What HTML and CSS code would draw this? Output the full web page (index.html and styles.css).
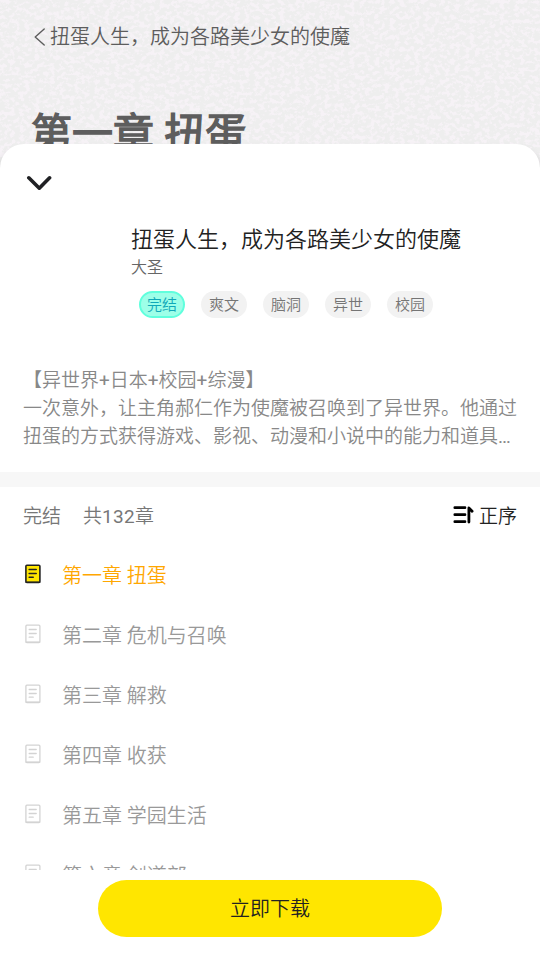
FILE: index.html
```
<!DOCTYPE html>
<html lang="zh-CN">
<head>
<meta charset="utf-8">
<title>扭蛋人生，成为各路美少女的使魔</title>
<link rel="stylesheet" href="styles.css">
</head>
<body>
<svg class="defs" aria-hidden="true">
  <symbol id="doc" viewBox="0 0 18 20">
    <rect class="page" x="1.9" y="1.2" width="14" height="17.3" rx="1"/>
    <path class="edge" d="M2.2 18.2h13.4"/>
    <path class="lines" d="M5.2 5.5h7M5.2 9.5h7M5.2 13.2h4"/>
  </symbol>
</svg>
<div class="app">
  <header class="reader">
    <svg class="paper" width="540" height="170" aria-hidden="true">
      <filter id="grain" x="0" y="0" width="100%" height="100%" color-interpolation-filters="sRGB">
        <feTurbulence type="fractalNoise" baseFrequency="0.2 0.25" numOctaves="3" seed="8"/>
        <feColorMatrix values="0 0 0 0 .965  0 0 0 0 .949  0 0 0 0 .965  7 0 0 0 -3.3"/>
      </filter>
      <rect width="540" height="170" filter="url(#grain)"/>
    </svg>
    <div class="back">
      <svg width="12" height="18" viewBox="0 0 12 18"><path d="M10.2 1L1.2 9l9 8"/></svg>
      <span>扭蛋人生，成为各路美少女的使魔</span>
    </div>
    <h1>第一章 扭蛋</h1>
  </header>
  <main class="sheet">
    <svg class="collapse" width="26" height="16" viewBox="0 0 26 16"><path d="M2.8 2.8l10.5 10.4L23.6 2.8"/></svg>
    <section class="book">
      <h2>扭蛋人生，成为各路美少女的使魔</h2>
      <p class="author">大圣</p>
      <div class="tags"><span class="tag done">完结</span><span class="tag">爽文</span><span class="tag">脑洞</span><span class="tag">异世</span><span class="tag">校园</span></div>
    </section>
    <p class="intro">【异世界<b>+</b>日本<b>+</b>校园<b>+</b>综漫】<br>一次意外，让主角郝仁作为使魔被召唤到了异世界。他通过<br>扭蛋的方式获得游戏、影视、动漫和小说中的能力和道具<b>…</b></p>
    <div class="divider"></div>
    <div class="summary">
      <span>完结</span><span class="count">共<span class="number">132</span>章</span>
      <span class="sort"><svg width="21" height="18" viewBox="0 0 21 18"><path d="M1.8 1.7H12M1.8 8.7H12M1.8 15.7H12"/><path class="arrow" d="M15.9 16V1.9l3.2 3.3"/></svg>正序</span>
    </div>
    <ul class="chapters">
      <li class="current"><svg><use href="#doc"/></svg>第一章 扭蛋</li>
      <li><svg><use href="#doc"/></svg>第二章 危机与召唤</li>
      <li><svg><use href="#doc"/></svg>第三章 解救</li>
      <li><svg><use href="#doc"/></svg>第四章 收获</li>
      <li><svg><use href="#doc"/></svg>第五章 学园生活</li>
      <li><svg><use href="#doc"/></svg>第六章 剑道部</li>
    </ul>
    <footer><button>立即下载</button></footer>
  </main>
</div>
</body>
</html>
```

FILE: styles.css
```
* { box-sizing: border-box; }
body, h1, h2, p, ul { margin: 0; padding: 0; }
body { font-family: Roboto, "Noto Sans CJK SC", sans-serif; font-weight: 350; background: #fff; overflow: hidden; }
.defs { position: absolute; width: 0; height: 0; }
svg { display: block; flex: none; fill: none; stroke-linecap: round; stroke-linejoin: round; }
.app { width: 540px; height: 960px; display: flex; flex-direction: column; background: #eee; overflow: hidden; }

.reader { height: 144px; flex: none; position: relative; color: #5d5d5d; padding: 22px 31px 0; }
.paper { position: absolute; left: 0; top: 0; }
.back, .reader h1 { position: relative; }
.back { display: flex; align-items: center; height: 30px; font-size: 20px; line-height: 30px; padding-left: 3px; gap: 4px; }
.back svg { margin-top: -1px; }
.back path { stroke: #5d5d5d; stroke-width: 1.4; }
.reader h1 { font-size: 41px; line-height: 60px; margin-top: 52px; font-weight: 400; -webkit-text-stroke: 1.4px #5d5d5d; white-space: nowrap; }

.sheet { position: relative; height: 816px; flex: none; background: #fff; border-radius: 24px 24px 0 0; box-shadow: 0 8px 9px rgba(0,0,0,.35); display: flex; flex-direction: column; }
.collapse { margin: 31px 0 0 26px; }
.collapse path { stroke: #202124; stroke-width: 3.6; }
.book { height: 170px; padding: 33px 0 0 131px; }
.book h2 { font-size: 22px; line-height: 32px; font-weight: 350; color: #222; }
.author { font-size: 16px; line-height: 24px; color: #666; }
.tags { display: flex; gap: 16px; padding: 11px 0 0 8px; }
.tag { width: 46px; height: 27px; border-radius: 14px; background: #f2f2f2; color: #757575; font-size: 15px; line-height: 25px; padding-top: 2px; text-align: center; }
.tag.done { background: #9dffe8; border: 2px solid #60ffdd; line-height: 25px; padding-top: 0; color: #10a8b8; }
.intro { padding: 6px 0 0 23px; height: 111px; font-size: 19px; line-height: 28px; color: #888; white-space: nowrap; }
.intro b { font-weight: 400; }
.divider { height: 15px; background: #f7f7f7; flex: none; }
.summary { height: 58px; flex: none; display: flex; align-items: center; padding: 2px 23px 0; font-size: 19px; line-height: 28px; color: #777; }
.count { margin-left: 22px; }
.number { font-weight: 400; letter-spacing: .3px; }
.sort { margin-left: auto; display: flex; align-items: center; gap: 5px; color: #222; }
.sort svg { margin-top: -5px; }
.sort path { stroke: #000; stroke-width: 2.7; }
.sort .arrow { stroke-width: 2.8; }

.chapters { list-style: none; height: 325px; flex: none; overflow: hidden; }
.chapters li { height: 60px; display: flex; align-items: center; gap: 20px; padding: 2px 0 0 24px; font-size: 20px; line-height: 30px; color: #999; }
.chapters svg { width: 18px; height: 20px; margin-top: -4px; stroke: #d3d3d3; stroke-width: 1.3; }
.chapters .current { color: #ffa700; }
.chapters .current svg { fill: #ffe600; stroke: #222; stroke-width: 1.6; }
footer { display: flex; justify-content: center; padding-top: 10px; }
footer button { width: 344px; height: 57px; border: 0; border-radius: 29px; padding: 2px 0 0; background: #ffe600; color: #222; font: 350 20px/55px Roboto, "Noto Sans CJK SC", sans-serif; }
```
